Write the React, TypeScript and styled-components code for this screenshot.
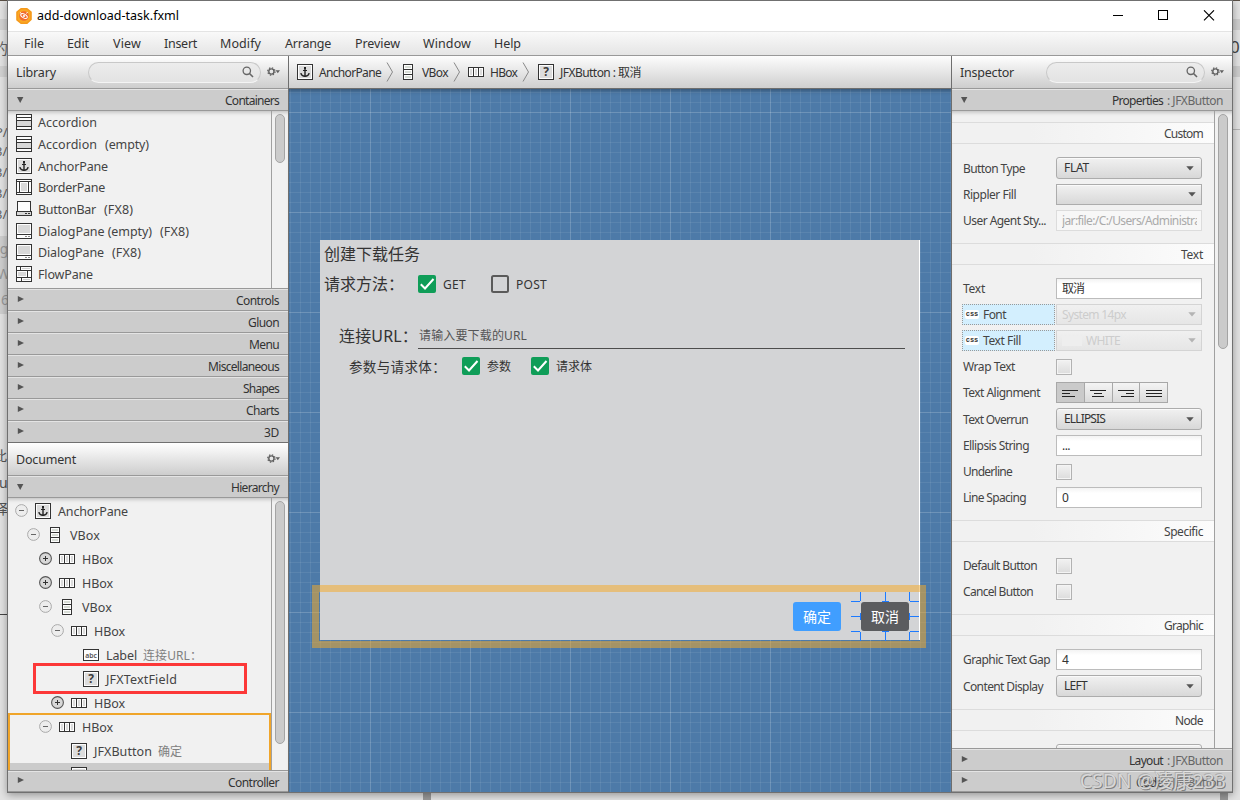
import React, { useLayoutEffect, useRef } from "react";
import styled, { createGlobalStyle } from "styled-components";

const GlobalStyle = createGlobalStyle`
  * { box-sizing: border-box; }
  html, body { margin: 0; padding: 0; }
  body {
    width: 1240px;
    height: 800px;
    overflow: hidden;
    font-family: "Noto Sans", "Noto Sans CJK SC", sans-serif;
    font-size: 12px;
    color: #333;
  }
`;

/* ---------- text ---------- */

const FitSpan = styled.span<{ $size: number; $color: string; $w: number; $drop?: boolean }>`
  display: block;
  flex: none;
  width: ${(p) => p.$w}px;
  margin-top: ${(p) => (p.$drop ? 2 : 0)}px;
  font-size: ${(p) => p.$size}px;
  line-height: 20px;
  color: ${(p) => p.$color};
  white-space: pre;
`;

interface FitProps {
  w: number;
  size?: number;
  color?: string;
  drop?: boolean;
  children: string;
}

/* Text tracked so that it fills a given advance width. */
function Fit({ w, size = 12, color = "#333", drop, children }: FitProps) {
  const ref = useRef<HTMLSpanElement>(null);
  useLayoutEffect(() => {
    const el = ref.current;
    if (!el) return;
    el.style.letterSpacing = "0";
    const range = document.createRange();
    range.selectNodeContents(el);
    const natural = range.getBoundingClientRect().width;
    el.style.letterSpacing = `${(w - natural) / children.length}px`;
  }, [w, size, children]);
  return (
    <FitSpan ref={ref} $w={w} $size={size} $color={color} $drop={drop}>
      {children}
    </FitSpan>
  );
}

/* ---------- icons ---------- */

type IconName = "accordion" | "anchor" | "border" | "buttonbar" | "dialog" | "flow" | "vbox" | "hbox" | "label" | "unknown" | "grid";

const Glyph = styled.svg`
  display: block;
  flex: none;
`;

function NodeIcon({ name }: { name: IconName }) {
  const frame = <rect x="0.5" y="0.5" width="15" height="15" fill="#fdfdfd" stroke="#333" />;
  const body: Record<IconName, React.ReactNode> = {
    accordion: (
      <>
        {frame}
        <rect x="1" y="7" width="14" height="5" fill="#d8d8d8" />
        <path d="M0 3.5H16M0 6.5H16M0 12.5H16" stroke="#333" />
      </>
    ),
    anchor: (
      <>
        {frame}
        <rect x="2" y="2" width="12" height="12" fill="#dcdcdc" />
        <path d="M8 4V12.5" stroke="#222" strokeWidth="1.4" shapeRendering="auto" />
        <path d="M6 6.5H10" stroke="#222" />
        <path d="M3.8 9.2Q4.6 12.3 8 12.3Q11.4 12.3 12.2 9.2" fill="none" stroke="#222" strokeWidth="1.4" shapeRendering="auto" />
        <rect x="7" y="3" width="2" height="2" fill="#222" />
      </>
    ),
    border: (
      <>
        {frame}
        <path d="M0 2.5H16M0 13.5H16M3.5 2V14M12.5 2V14" stroke="#333" />
        <rect x="5" y="4" width="6" height="8" fill="#d8d8d8" />
      </>
    ),
    buttonbar: (
      <>
        <path d="M1.5 11V0.5H14.5V11" fill="#fdfdfd" stroke="#333" />
        <rect x="0.5" y="10.5" width="15" height="4" fill="#d8d8d8" stroke="#333" />
        <path d="M9 12.5H11M12 12.5H14" stroke="#333" />
      </>
    ),
    dialog: (
      <>
        {frame}
        <rect x="2" y="2" width="12" height="8" fill="#d8d8d8" />
        <path d="M0 11.5H16" stroke="#333" />
        <path d="M9 13.5H11M12 13.5H14" stroke="#888" />
      </>
    ),
    flow: (
      <>
        {frame}
        <path d="M0 4.5H16M0 11.5H16M4.5 0V4M11.5 4V11M5.5 11V16" stroke="#333" />
        <path d="M6 2.5H14M7 13.5H14" stroke="#d0d0d0" />
        <rect x="2" y="6" width="8" height="4" fill="#d8d8d8" />
      </>
    ),
    vbox: (
      <>
        <rect x="3.5" y="0.5" width="9" height="15" fill="#fdfdfd" stroke="#333" />
        <path d="M5 3H11M5 8H11M5 13H11" stroke="#d8ddd6" strokeWidth="2" />
        <path d="M3 5.5H13M3 10.5H13" stroke="#333" />
      </>
    ),
    hbox: (
      <>
        <rect x="0.5" y="3.5" width="15" height="9" fill="#fdfdfd" stroke="#333" />
        <path d="M3 5V11M8 5V11M13 5V11" stroke="#dcdcdc" strokeWidth="2" />
        <path d="M5.5 3V13M10.5 3V13" stroke="#333" />
      </>
    ),
    label: (
      <>
        <rect x="0.5" y="2.5" width="15" height="11" fill="#fdfdfd" stroke="#333" />
        <text x="8" y="10.5" textAnchor="middle" fontSize="6.8" fontWeight="600" fontFamily="Noto Sans" fill="#555">abc</text>
      </>
    ),
    unknown: (
      <>
        {frame}
        <rect x="2" y="2" width="12" height="12" fill="#dcdcdc" />
        <text x="8" y="12.4" textAnchor="middle" fontSize="12" fontWeight="700" fontFamily="Noto Sans" fill="#3a3a3a">?</text>
      </>
    ),
    grid: frame,
  };
  return (
    <Glyph width="16" height="16" viewBox="0 0 16 16" shapeRendering="crispEdges">
      {body[name]}
    </Glyph>
  );
}

const SearchGlyph = () => (
  <Glyph width="12" height="12" viewBox="0 0 12 12" fill="none" stroke="#666" strokeWidth="1.3">
    <circle cx="4.8" cy="4.8" r="3.7" />
    <path d="M7.5 7.5L11 11" strokeWidth="1.6" />
  </Glyph>
);

const GearSvg = styled(Glyph)`
  margin-top: -2px;
`;

const GearGlyph = () => (
  <GearSvg width="13" height="9" viewBox="0 0 13 9">
    <circle cx="4.4" cy="4.5" r="2.6" fill="none" stroke="#606060" strokeWidth="1.4" />
    <circle cx="4.4" cy="4.5" r="3.7" fill="none" stroke="#606060" strokeWidth="1.2" strokeDasharray="1.4 1.506" />
    <path d="M8.6 3.2H13L10.8 6.2Z" fill="#606060" />
  </GearSvg>
);

const ArrowSvg = styled(Glyph)<{ $open?: boolean }>`
  margin-top: ${(p) => (p.$open ? 0 : -4)}px;
`;

const Arrow = ({ open }: { open?: boolean }) => (
  <ArrowSvg $open={open} width="8" height="8" viewBox="0 0 8 8">
    <path d={open ? "M0 1H6.4L3.2 7Z" : "M0.8 0.9V7.1L7 4Z"} fill="#555" />
  </ArrowSvg>
);

const Toggle = ({ plus }: { plus?: boolean }) => (
  <Glyph width="13" height="13" viewBox="0 0 13 13">
    <circle cx="6.5" cy="6.5" r="5.9" fill={plus ? "#d8d8d8" : "#ededed"} stroke={plus ? "#555" : "#aaa"} strokeWidth={plus ? 1.1 : 1} />
    <path d={plus ? "M4 6.5H9M6.5 4V9" : "M4 6.5H9"} stroke={plus ? "#333" : "#666"} />
  </Glyph>
);

/* ---------- desktop and window ---------- */

const Desktop = styled.div`
  position: relative;
  width: 1240px;
  height: 800px;
  overflow: hidden;
  padding-left: 7px;
  background: #e3e3e3;
`;

const Behind = styled.span<{ $x: number; $y: number; $c?: string; $s?: number }>`
  position: absolute;
  left: ${(p) => p.$x}px;
  top: ${(p) => p.$y}px;
  font-size: ${(p) => p.$s ?? 14}px;
  line-height: 20px;
  color: ${(p) => p.$c ?? "#666"};
  white-space: nowrap;
`;

const BehindBlock = styled.div<{ $x: number; $y: number; $w: number; $h: number; $c: string }>`
  position: absolute;
  left: ${(p) => p.$x}px;
  top: ${(p) => p.$y}px;
  width: ${(p) => p.$w}px;
  height: ${(p) => p.$h}px;
  background: ${(p) => p.$c};
`;

const Window = styled.div`
  position: relative;
  display: flex;
  flex-direction: column;
  width: 1226px;
  height: 793px;
  border: 1px solid #707070;
  background: #f1f1f1;
  box-shadow: 0 2px 8px rgba(0, 0, 0, 0.35);
`;

const TitleBar = styled.div`
  display: flex;
  align-items: center;
  height: 31px;
  padding: 0 17px 0 8px;
  background: #fff;
  border-bottom: 1px solid #e4e4e4;
`;

const TitleText = styled.div`
  flex: 1;
  padding-left: 5px;
`;

const Caption = styled.div`
  display: flex;
  gap: 34px;
  margin-top: -1px;
`;

const MenuBar = styled.div`
  display: flex;
  align-items: center;
  height: 24px;
  padding-left: 16px;
  background: linear-gradient(#f9f9f9, #e5e5e5);
  border-bottom: 1px solid #999;
`;

const MenuItem = styled.div<{ $slot: number }>`
  width: ${(p) => p.$slot}px;
`;

const Columns = styled.div`
  display: flex;
  flex: 1;
  min-height: 0;
`;

const SideColumn = styled.div<{ $right?: boolean }>`
  display: flex;
  flex-direction: column;
  width: 281px;
  ${(p) => (p.$right ? "border-left" : "border-right")}: 1px solid #6e6e6e;
`;

const PanelHeader = styled.div`
  display: flex;
  align-items: center;
  flex: none;
  height: 33px;
  padding: 0 8px;
  background: linear-gradient(#fff, #cdcdcd);
  border-bottom: 1px solid #999;
`;

const Spacer = styled.div`
  flex: 1;
`;

const SearchBox = styled.div<{ $w: number; $gap: number }>`
  display: flex;
  align-items: center;
  justify-content: flex-end;
  width: ${(p) => p.$w}px;
  height: 21px;
  margin-right: ${(p) => p.$gap}px;
  padding: 0 6px 1px 0;
  border: 1px solid #c8c8c8;
  border-bottom-color: #f4f4f4;
  border-radius: 11px;
  background: linear-gradient(#ececec, #e3e3e3);
`;

const SectionBar = styled.div<{ $h?: number; $dark?: boolean; $pad?: number; $nudge?: number }>`
  display: flex;
  align-items: center;
  justify-content: space-between;
  flex: none;
  height: ${(p) => p.$h ?? 22}px;
  padding: ${(p) => p.$nudge ?? 0}px ${(p) => p.$pad ?? 9}px 0 9px;
  background: #ccc;
  border-top: 1px solid #e4e4e4;
  border-bottom: 1px solid ${(p) => (p.$dark ? "#707070" : "#999")};
`;

const BarText = styled.div`
  display: flex;
  gap: 4px;
`;

const ScrollArea = styled.div<{ $h: number }>`
  position: relative;
  display: flex;
  flex: none;
  height: ${(p) => p.$h}px;
  overflow: hidden;
  border-bottom: 1px solid #999;
  box-shadow: inset 0 4px 4px -3px rgba(0, 0, 0, 0.25);
`;

const ScrollContent = styled.div<{ $w: number }>`
  position: relative;
  width: ${(p) => p.$w}px;
  flex: none;
  overflow: hidden;
`;

const ScrollTrack = styled.div`
  flex: 1;
  border-left: 1px solid #a0a0a0;
  padding: 3px 0 0 3px;
`;

const ScrollThumb = styled.div<{ $h: number }>`
  width: 10px;
  height: ${(p) => p.$h}px;
  border: 1px solid #a4a4a4;
  border-radius: 5px;
  background: #cbcbcb;
`;

/* ---------- library ---------- */

const LibraryList = styled.div`
  display: flex;
  flex-direction: column;
  padding-top: 0.3px;
`;

const LibraryRow = styled.div`
  display: flex;
  align-items: center;
  flex: none;
  height: 21.7px;
  padding-left: 8px;
  svg { margin-right: 6px; }
`;

const Note = styled.div<{ $gap: number }>`
  margin-left: ${(p) => p.$gap}px;
`;

const libraryItems: { icon: IconName; name: string; w: number; note?: string; nw?: number }[] = [
  { icon: "accordion", name: "Accordion", w: 59 },
  { icon: "accordion", name: "Accordion", w: 59, note: "(empty)", nw: 44 },
  { icon: "anchor", name: "AnchorPane", w: 70 },
  { icon: "border", name: "BorderPane", w: 67 },
  { icon: "buttonbar", name: "ButtonBar", w: 58, note: "(FX8)", nw: 29 },
  { icon: "dialog", name: "DialogPane (empty)", w: 114, note: "(FX8)", nw: 29 },
  { icon: "dialog", name: "DialogPane", w: 66, note: "(FX8)", nw: 29 },
  { icon: "flow", name: "FlowPane", w: 55 },
  { icon: "grid", name: " ", w: 4 },
];

const libraryGroups: [string, number][] = [
  ["Controls", 43],
  ["Gluon", 31],
  ["Menu", 30],
  ["Miscellaneous", 71],
  ["Shapes", 36],
  ["Charts", 33],
  ["3D", 15],
];

/* ---------- hierarchy ---------- */

const TreeRow = styled.div<{ $depth: number; $selected?: boolean }>`
  display: flex;
  align-items: center;
  height: 24px;
  padding-left: ${(p) => 7 + p.$depth * 12}px;
  background: ${(p) => (p.$selected ? "#cbcbcb" : "transparent")};
`;

const ToggleSlot = styled.div`
  width: 20px;
  flex: none;
  margin-top: -2px;
`;

const TreeIcon = styled.div`
  width: 23px;
  margin-top: -1px;
`;

const TreeList = styled.div`
  padding-top: 1px;
`;

const DropFrame = styled.div`
  position: absolute;
  left: 0;
  top: 215px;
  width: 263px;
  height: 90px;
  border: 2px solid #f0a52a;
`;

const RedMark = styled.div`
  position: absolute;
  left: 25px;
  top: 165px;
  width: 214px;
  height: 31px;
  border: 3px solid #fc3838;
`;

interface TreeItem {
  d: number;
  icon: IconName;
  name: string;
  w: number;
  sign?: "+" | "-";
  info?: string;
  iw?: number;
  selected?: boolean;
}

const tree: TreeItem[] = [
  { d: 0, icon: "anchor", name: "AnchorPane", w: 70, sign: "-" },
  { d: 1, icon: "vbox", name: "VBox", w: 30, sign: "-" },
  { d: 2, icon: "hbox", name: "HBox", w: 31, sign: "+" },
  { d: 2, icon: "hbox", name: "HBox", w: 31, sign: "+" },
  { d: 2, icon: "vbox", name: "VBox", w: 30, sign: "-" },
  { d: 3, icon: "hbox", name: "HBox", w: 31, sign: "-" },
  { d: 4, icon: "label", name: "Label", w: 31, info: "连接URL：", iw: 59 },
  { d: 4, icon: "unknown", name: "JFXTextField", w: 71 },
  { d: 3, icon: "hbox", name: "HBox", w: 31, sign: "+" },
  { d: 2, icon: "hbox", name: "HBox", w: 31, sign: "-" },
  { d: 3, icon: "unknown", name: "JFXButton", w: 58, info: "确定", iw: 24 },
  { d: 3, icon: "unknown", name: " ", w: 4, selected: true },
];

/* ---------- centre ---------- */

const Centre = styled.div`
  display: flex;
  flex-direction: column;
  flex: 1;
  min-width: 0;
`;

const Crumbs = styled.div`
  display: flex;
  align-items: center;
  height: 33px;
  flex: none;
  padding-left: 8px;
  background: linear-gradient(#fdfdfd, #cfcfcf);
  border-bottom: 1px solid #6e6e6e;
`;

const CrumbIcon = styled.div<{ $gap: number }>`
  margin-right: ${(p) => p.$gap}px;
`;

const Chevron = styled.svg<{ $after: number }>`
  margin: 0 ${(p) => p.$after}px 0 5px;
  flex: none;
`;

const Canvas = styled.div`
  flex: 1;
  padding: 151px 0 0 31px;
  background-color: #4d7aa8;
  background-image: linear-gradient(90deg, rgba(255, 255, 255, 0.12) 1px, transparent 1px),
    linear-gradient(rgba(255, 255, 255, 0.12) 1px, transparent 1px),
    linear-gradient(90deg, rgba(255, 255, 255, 0.075) 1px, transparent 1px),
    linear-gradient(rgba(255, 255, 255, 0.075) 1px, transparent 1px);
  background-size: 100px 100px, 100px 100px, 10px 10px, 10px 10px;
  background-position: 81px 23px, 81px 23px, 1px 3px, 1px 3px;
  box-shadow: inset 0 5px 4px -3px rgba(0, 0, 0, 0.3);
`;

const Form = styled.div`
  position: relative;
  display: flex;
  flex-direction: column;
  width: 600px;
  height: 400px;
  padding-top: 3px;
  background: #d3d4d6;
  border-right: 1px solid #fff;
`;

const FormRow = styled.div<{ $h: number; $indent: number; $top?: number }>`
  display: flex;
  align-items: center;
  height: ${(p) => p.$h}px;
  margin-top: ${(p) => p.$top ?? 0}px;
  padding-left: ${(p) => p.$indent}px;
`;

const CheckSlot = styled.div<{ $before: number }>`
  margin: 0 7px 0 ${(p) => p.$before}px;
`;

const Check = ({ on }: { on?: boolean }) => (
  <Glyph width="18" height="18" viewBox="0 0 18 18">
    {on ? (
      <>
        <rect width="18" height="18" rx="2" fill="#0f9d58" />
        <path d="M2.8 9.3L7 13.5L15.5 4" fill="none" stroke="#fff" strokeWidth="2" />
      </>
    ) : (
      <rect x="1" y="1" width="16" height="16" rx="1.5" fill="none" stroke="#5a5a5a" strokeWidth="2" />
    )}
  </Glyph>
);

const UrlInput = styled.div`
  width: 487px;
  height: 26px;
  padding: 3px 0 0 1px;
  border-bottom: 1px solid #4d4d4d;
`;

const ButtonRow = styled.div`
  display: flex;
  justify-content: flex-end;
  gap: 20px;
  margin-top: auto;
  padding: 0 10px 9px 0;
`;

const FormButton = styled.div<{ $bg: string }>`
  display: flex;
  align-items: center;
  justify-content: center;
  width: 48px;
  height: 29px;
  border-radius: 3px;
  background: ${(p) => p.$bg};
`;

const ParentRing = styled.div`
  position: absolute;
  left: -8px;
  top: 345px;
  width: 614px;
  height: 63px;
  border: solid rgba(245, 170, 40, 0.52);
  border-width: 7px 6px 7px 7px;
`;

const Handles = styled.svg`
  position: absolute;
  left: 531px;
  top: 352px;
`;

/* ---------- inspector ---------- */

const GroupTitle = styled.div<{ $top?: number }>`
  display: flex;
  align-items: center;
  justify-content: flex-end;
  height: 22px;
  margin-top: ${(p) => p.$top ?? 12}px;
  padding: 2px 11px 0 0;
  border-top: 1px solid #dcdcdc;
  border-bottom: 1px solid #dcdcdc;
  background: linear-gradient(90deg, #f1f1f1 30%, #fcfcfc);
`;

const Fields = styled.div`
  display: flex;
  flex-direction: column;
  gap: 5px;
  padding: 13px 0 0 10px;
`;

const FieldRow = styled.div`
  display: flex;
  align-items: center;
`;

const FieldLabel = styled.div<{ $css?: boolean }>`
  display: flex;
  align-items: center;
  width: 93px;
  height: 21px;
  margin-right: 1px;
  padding-left: ${(p) => (p.$css ? 2 : 1)}px;
  padding-top: ${(p) => (p.$css ? 0 : 1)}px;
  background: ${(p) => (p.$css ? "#d3effe" : "transparent")};
  border: ${(p) => (p.$css ? "1px dotted #999" : "0 solid transparent")};
`;

const CssBadge = styled.div`
  display: flex;
  align-items: center;
  justify-content: center;
  width: 14px;
  height: 9px;
  margin-right: 4px;
  background: #fff;
  border-radius: 2px;
  font-family: "Liberation Mono", monospace;
  font-size: 7px;
  font-weight: 700;
  line-height: 9px;
  color: #333;
`;

const TextInput = styled.div<{ $off?: boolean }>`
  width: 146px;
  height: 21px;
  padding: 0 4px 0 5px;
  background: ${(p) => (p.$off ? "#f7f7f7" : "linear-gradient(#f3f3f3, #fff 5px)")};
  border: 1px solid ${(p) => (p.$off ? "#dcdcdc" : "#bcbcbc")};
`;

const Clip = styled.div`
  overflow: hidden;
`;

const Combo = styled.div<{ $square?: boolean; $off?: boolean }>`
  display: flex;
  align-items: center;
  justify-content: space-between;
  width: 146px;
  height: ${(p) => (p.$square ? 21 : 22)}px;
  padding: 0 ${(p) => (p.$square ? 5 : 7)}px;
  border: 1px solid ${(p) => (p.$off ? "#d4d4d4" : "#acacac")};
  border-radius: ${(p) => (p.$square ? 0 : 3)}px;
  background: ${(p) => (p.$off ? "linear-gradient(#f0f0f0, #e6e6e6)" : "linear-gradient(#f1f1f1, #d8d8d8)")};
  box-shadow: ${(p) => (p.$off ? "none" : "inset 0 1px #fafafa")};
`;

const Swatch = styled.div`
  width: 20px;
  height: 10px;
  margin-right: 4px;
  background: #eee;
`;

const Inline = styled.div`
  display: flex;
  align-items: center;
`;

const ComboArrow = ({ off }: { off?: boolean }) => (
  <Glyph width="8" height="5" viewBox="0 0 8 5">
    <path d="M0.3 0.3H7.7L4 4.5Z" fill={off ? "#b4b4b4" : "#555"} />
  </Glyph>
);

const CheckCell = styled.div`
  width: 16px;
  height: 16px;
  margin-top: 1px;
  border: 1px solid #b2b2b2;
  background: linear-gradient(#f2f2f2, #dcdcdc);
  box-shadow: inset 0 0 0 1px #f4f4f4;
`;

const AlignGroup = styled.div`
  display: flex;
  width: 112px;
  height: 21px;
  border: 1px solid #a8a8a8;
`;

const AlignCell = styled.div<{ $on?: boolean }>`
  display: flex;
  align-items: center;
  justify-content: center;
  flex: 1;
  padding-top: 2px;
  background: ${(p) => (p.$on ? "#cacaca" : "linear-gradient(#f4f4f4, #dadada)")};
  & + & { border-left: 1px solid #a8a8a8; }
`;

const alignPaths = [
  "M0 1.5H16M0 4.5H8M0 7.5H13",
  "M0 1.5H16M4 4.5H12M2 7.5H14",
  "M0 1.5H16M8 4.5H16M3 7.5H16",
  "M0 1.5H16M0 4.5H16M0 7.5H16",
];

const Watermark = styled.div`
  position: absolute;
  left: 1080px;
  top: 771px;
  opacity: 0.9;
  text-shadow: 1px 1px 0 rgba(110, 110, 110, 0.9), -1px -1px 0 rgba(150, 150, 150, 0.6);
`;

interface RowProps {
  label: string;
  w: number;
  css?: boolean;
  children: React.ReactNode;
}

const Row = ({ label, w, css, children }: RowProps) => (
  <FieldRow>
    <FieldLabel $css={css}>
      {css && <CssBadge>css</CssBadge>}
      <Fit w={w} color="#444">{label}</Fit>
    </FieldLabel>
    {children}
  </FieldRow>
);

const Select = ({ value, w }: { value: string; w: number }) => (
  <Combo>
    <Fit w={w}>{value}</Fit>
    <ComboArrow />
  </Combo>
);

const Title = ({ text, w, top }: { text: string; w: number; top?: number }) => (
  <GroupTitle $top={top}>
    <Fit w={w} color="#444">{text}</Fit>
  </GroupTitle>
);

const menus: [string, number, number][] = [
  ["File", 20, 43],
  ["Edit", 22, 46],
  ["View", 28, 51],
  ["Insert", 33, 56],
  ["Modify", 41, 65],
  ["Arrange", 46, 70],
  ["Preview", 45, 68],
  ["Window", 48, 71],
  ["Help", 27, 40],
];

const ChevronMark = ({ after }: { after: number }) => (
  <Chevron $after={after} width="8" height="20" viewBox="0 0 8 20" fill="none" stroke="#888">
    <path d="M1 0.5L6.5 10L1 19.5" />
  </Chevron>
);

export default function App() {
  return (
    <Desktop>
      <GlobalStyle />
      <BehindBlock $x={0} $y={0} $w={1240} $h={1} $c="#5a5046" />
      <BehindBlock $x={0} $y={236} $w={7} $h={78} $c="#cfcfcf" />
      <BehindBlock $x={0} $y={614} $w={7} $h={1} $c="#444" />
      <BehindBlock $x={1233} $y={19} $w={7} $h={11} $c="#cfcfcf" />
      <BehindBlock $x={1233} $y={66} $w={7} $h={11} $c="#cdcdcd" />
      <BehindBlock $x={1233} $y={129} $w={7} $h={1} $c="#b5b5b5" />
      <BehindBlock $x={0} $y={19} $w={7} $h={11} $c="#d2d2d2" />
      <BehindBlock $x={0} $y={66} $w={7} $h={11} $c="#d2d2d2" />
      <BehindBlock $x={423} $y={793} $w={8} $h={7} $c="#999" />
      <BehindBlock $x={1220} $y={793} $w={8} $h={7} $c="#999" />
      <Behind $x={-7} $y={38} $s={15}>的</Behind>
      <Behind $x={1230} $y={37} $s={17} $c="#444">0</Behind>
      <Behind $x={-5} $y={122} $s={13}>P/</Behind>
      <Behind $x={-5} $y={141} $s={13}>3/</Behind>
      <Behind $x={-5} $y={162} $s={13}>3/</Behind>
      <Behind $x={-5} $y={183} $s={13}>3/</Behind>
      <Behind $x={-5} $y={204} $s={13}>3/</Behind>
      <Behind $x={-9} $y={239} $c="#999">ng</Behind>
      <Behind $x={-3} $y={264} $c="#999">W</Behind>
      <Behind $x={1} $y={290} $c="#999">6</Behind>
      <Behind $x={-7} $y={446} $c="#555">此</Behind>
      <Behind $x={-1} $y={473} $c="#555">u</Behind>
      <Behind $x={-6} $y={499} $c="#555">译</Behind>
      <Window>
        <TitleBar>
          <Glyph width="16" height="16" viewBox="0 0 16 16">
            <path d="M5 0.8H11L15 4V11.5L11 15.2H5L1 12V4Z" fill="#f9a825" stroke="#f59a1c" strokeWidth="1.6" strokeLinejoin="round" />
            <circle cx="8" cy="8" r="4.8" fill="#f26b2c" />
            <ellipse cx="8" cy="8" rx="3.6" ry="1.9" fill="none" stroke="#fff" transform="rotate(30 8 8)" />
            <circle cx="8" cy="8" r="1.1" fill="#fff" />
            <path d="M4 4.5L5.5 5.5M11.5 4L10.5 5.5" stroke="#fff" />
          </Glyph>
          <TitleText>
            <Fit w={142} size={12.5} color="#000">add-download-task.fxml</Fit>
          </TitleText>
          <Caption>
            <Glyph width="12" height="12" viewBox="0 0 12 12"><path d="M2 5.5H12" stroke="#000" /></Glyph>
            <Glyph width="12" height="12" viewBox="0 0 12 12"><rect x="1.5" y="0.5" width="9" height="9" fill="none" stroke="#000" /></Glyph>
            <Glyph width="12" height="12" viewBox="0 0 12 12"><path d="M1 0.3L11 10.3M11 0.3L1 10.3" stroke="#000" strokeWidth="1.1" /></Glyph>
          </Caption>
        </TitleBar>
        <MenuBar>
          {menus.map(([name, w, slot]) => (
            <MenuItem key={name} $slot={slot}>
              <Fit w={w} size={12.5}>{name}</Fit>
            </MenuItem>
          ))}
        </MenuBar>
        <Columns>
          <SideColumn>
            <PanelHeader>
              <Fit w={40} size={12.5} drop>Library</Fit>
              <Spacer />
              <SearchBox $w={173} $gap={6}><SearchGlyph /></SearchBox>
              <GearGlyph />
            </PanelHeader>
            <SectionBar>
              <Arrow open />
              <Fit w={54} drop>Containers</Fit>
            </SectionBar>
            <ScrollArea $h={178}>
              <ScrollContent $w={263}>
                <LibraryList>
                  {libraryItems.map((it, i) => (
                    <LibraryRow key={i}>
                      <NodeIcon name={it.icon} />
                      <Fit w={it.w} size={12.5} color="#444" drop>{it.name}</Fit>
                      {it.note && (
                        <Note $gap={8}>
                          <Fit w={it.nw ?? 29} size={12.5} color="#444" drop>{it.note}</Fit>
                        </Note>
                      )}
                    </LibraryRow>
                  ))}
                </LibraryList>
              </ScrollContent>
              <ScrollTrack><ScrollThumb $h={49} /></ScrollTrack>
            </ScrollArea>
            {libraryGroups.map(([name, w]) => (
              <SectionBar key={name} $dark={name === "3D"} $nudge={1}>
                <Arrow />
                <Fit w={w}>{name}</Fit>
              </SectionBar>
            ))}
            <PanelHeader>
              <Fit w={60} size={12.5} drop>Document</Fit>
              <Spacer />
              <GearGlyph />
            </PanelHeader>
            <SectionBar>
              <Arrow open />
              <Fit w={48} drop>Hierarchy</Fit>
            </SectionBar>
            <ScrollArea $h={273}>
              <ScrollContent $w={263}>
                <TreeList>
                  {tree.map((n, i) => (
                    <TreeRow key={i} $depth={n.d} $selected={n.selected}>
                      <ToggleSlot>{n.sign && <Toggle plus={n.sign === "+"} />}</ToggleSlot>
                      <TreeIcon><NodeIcon name={n.icon} /></TreeIcon>
                      <Fit w={n.w} size={12.5} color="#444" drop>{n.name}</Fit>
                      {n.info && (
                        <Note $gap={6}>
                          <Fit w={n.iw ?? 24} size={12} color="#808080" drop>{n.info}</Fit>
                        </Note>
                      )}
                    </TreeRow>
                  ))}
                </TreeList>
                <DropFrame />
                <RedMark />
              </ScrollContent>
              <ScrollTrack><ScrollThumb $h={243} /></ScrollTrack>
            </ScrollArea>
            <SectionBar $h={21} $nudge={1}>
              <Arrow />
              <Fit w={51} drop>Controller</Fit>
            </SectionBar>
          </SideColumn>

          <Centre>
            <Crumbs>
              <CrumbIcon $gap={6}><NodeIcon name="anchor" /></CrumbIcon>
              <Fit w={62} drop>AnchorPane</Fit>
              <ChevronMark after={6} />
              <CrumbIcon $gap={6}><NodeIcon name="vbox" /></CrumbIcon>
              <Fit w={26} drop>VBox</Fit>
              <ChevronMark after={7} />
              <CrumbIcon $gap={6}><NodeIcon name="hbox" /></CrumbIcon>
              <Fit w={27} drop>HBox</Fit>
              <ChevronMark after={8} />
              <CrumbIcon $gap={6}><NodeIcon name="unknown" /></CrumbIcon>
              <Fit w={81} drop>JFXButton : 取消</Fit>
            </Crumbs>
            <Canvas>
              <Form>
                <FormRow $h={22} $indent={4}>
                  <Fit w={96} size={16}>创建下载任务</Fit>
                </FormRow>
                <FormRow $h={30} $indent={4} $top={4}>
                  <Fit w={80} size={16}>请求方法：</Fit>
                  <CheckSlot $before={14}><Check on /></CheckSlot>
                  <Fit w={23} drop>GET</Fit>
                  <CheckSlot $before={25}><Check /></CheckSlot>
                  <Fit w={31} drop>POST</Fit>
                </FormRow>
                <FormRow $h={26} $indent={19} $top={24}>
                  <Fit w={79} size={16}>连接URL：</Fit>
                  <UrlInput>
                    <Fit w={108} color="#555">请输入要下载的URL</Fit>
                  </UrlInput>
                </FormRow>
                <FormRow $h={20} $indent={29} $top={7}>
                  <Fit w={97} size={13.5} drop>参数与请求体：</Fit>
                  <CheckSlot $before={16}><Check on /></CheckSlot>
                  <Fit w={24} drop>参数</Fit>
                  <CheckSlot $before={20}><Check on /></CheckSlot>
                  <Fit w={36} drop>请求体</Fit>
                </FormRow>
                <ButtonRow>
                  <FormButton $bg="#409eff"><Fit w={28} size={14} color="#fff">确定</Fit></FormButton>
                  <FormButton $bg="#5b5c5f"><Fit w={28} size={14} color="#fff">取消</Fit></FormButton>
                </ButtonRow>
                <ParentRing />
                <Handles width="69" height="49" viewBox="0 0 69 49" fill="none" stroke="#1e7bff" shapeRendering="crispEdges">
                  <path d="M9.5 0V9M0 9.5H9M34.5 0V10M31 9.5H38M58.5 0V9M59 9.5H68" />
                  <path d="M0 24.5H10M9.5 21V28M58 24.5H68M58.5 21V28" />
                  <path d="M0 39.5H9M9.5 40V49M31 39.5H38M34.5 39V49M59 39.5H68M58.5 40V49" />
                </Handles>
              </Form>
            </Canvas>
          </Centre>

          <SideColumn $right>
            <PanelHeader>
              <Fit w={54} size={12.5} drop>Inspector</Fit>
              <Spacer />
              <SearchBox $w={159} $gap={6}><SearchGlyph /></SearchBox>
              <GearGlyph />
            </PanelHeader>
            <SectionBar>
              <Arrow open />
              <BarText>
                <Fit w={51} drop>Properties</Fit>
                <Fit w={56} color="#666" drop>: JFXButton</Fit>
              </BarText>
            </SectionBar>
            <ScrollArea $h={638}>
              <ScrollContent $w={262}>
                <Title text="Custom" w={39} top={11} />
                <Fields>
                  <Row label="Button Type" w={62}><Select value="FLAT" w={25} /></Row>
                  <Row label="Rippler Fill" w={53}><Combo $square><span /><ComboArrow /></Combo></Row>
                  <Row label="User Agent Sty..." w={83}>
                    <TextInput $off>
                      <Clip><Fit w={142} color="#aaa">jar:file:/C:/Users/Administrat</Fit></Clip>
                    </TextInput>
                  </Row>
                </Fields>
                <Title text="Text" w={22} />
                <Fields>
                  <Row label="Text" w={22}><TextInput><Fit w={22}>取消</Fit></TextInput></Row>
                  <Row label="Font" w={23} css>
                    <Combo $square $off>
                      <Fit w={64} color="#cdcdcd">System 14px</Fit>
                      <ComboArrow off />
                    </Combo>
                  </Row>
                  <Row label="Text Fill" w={38} css>
                    <Combo $square $off>
                      <Inline><Swatch /><Fit w={34} color="#cdcdcd">WHITE</Fit></Inline>
                      <ComboArrow off />
                    </Combo>
                  </Row>
                  <Row label="Wrap Text" w={52}><CheckCell /></Row>
                  <Row label="Text Alignment" w={77}>
                    <AlignGroup>
                      {alignPaths.map((d, i) => (
                        <AlignCell key={d} $on={i === 0}>
                          <Glyph width="16" height="9" viewBox="0 0 16 9" stroke="#222" shapeRendering="crispEdges"><path d={d} /></Glyph>
                        </AlignCell>
                      ))}
                    </AlignGroup>
                  </Row>
                  <Row label="Text Overrun" w={65}><Select value="ELLIPSIS" w={41} /></Row>
                  <Row label="Ellipsis String" w={66}><TextInput><Fit w={8}>...</Fit></TextInput></Row>
                  <Row label="Underline" w={49}><CheckCell /></Row>
                  <Row label="Line Spacing" w={63}><TextInput><Fit w={7}>0</Fit></TextInput></Row>
                </Fields>
                <Title text="Specific" w={39} />
                <Fields>
                  <Row label="Default Button" w={74}><CheckCell /></Row>
                  <Row label="Cancel Button" w={70}><CheckCell /></Row>
                </Fields>
                <Title text="Graphic" w={39} />
                <Fields>
                  <Row label="Graphic Text Gap" w={87}><TextInput><Fit w={7}>4</Fit></TextInput></Row>
                  <Row label="Content Display" w={80}><Select value="LEFT" w={23} /></Row>
                </Fields>
                <Title text="Node" w={28} />
                <Fields>
                  <Row label=" " w={4}><Combo><span /></Combo></Row>
                </Fields>
              </ScrollContent>
              <ScrollTrack><ScrollThumb $h={235} /></ScrollTrack>
            </ScrollArea>
            <SectionBar $nudge={1}>
              <Arrow />
              <BarText>
                <Fit w={34}>Layout</Fit>
                <Fit w={56} color="#666">: JFXButton</Fit>
              </BarText>
            </SectionBar>
            <SectionBar $h={21} $nudge={1}>
              <Arrow />
              <BarText>
                <Fit w={27} drop>Code</Fit>
                <Fit w={56} color="#666" drop>: JFXButton</Fit>
              </BarText>
            </SectionBar>
          </SideColumn>
        </Columns>
      </Window>
      <Watermark>
        <Fit w={146} size={19} color="#d9d9d9">CSDN @凌康233</Fit>
      </Watermark>
    </Desktop>
  );
}
